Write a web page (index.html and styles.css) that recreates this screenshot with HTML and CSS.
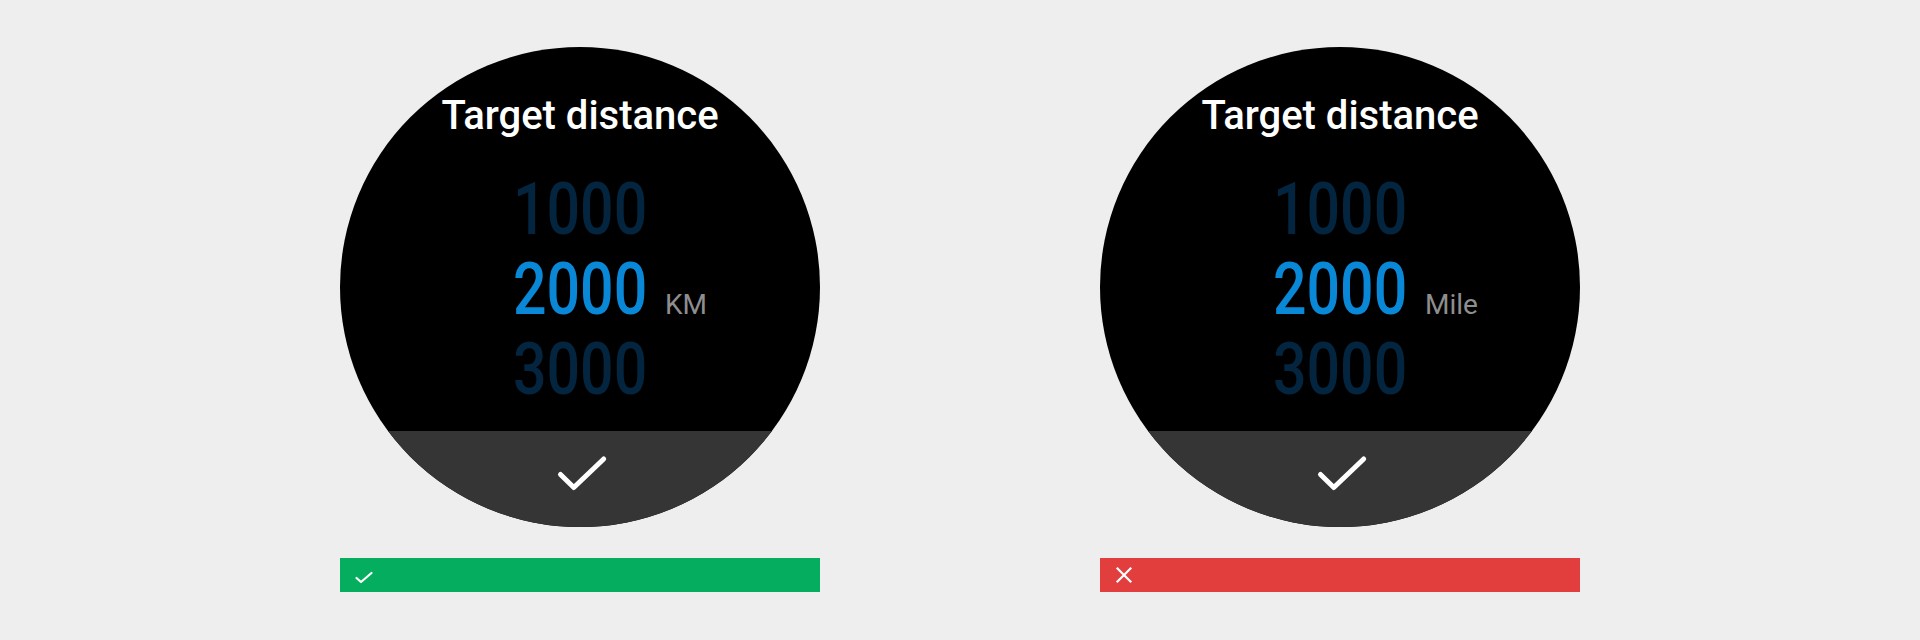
FILE: index.html
```html
<!DOCTYPE html>
<html lang="en">
<head>
<meta charset="utf-8">
<title>Target distance</title>
<link rel="stylesheet" href="styles.css">
</head>
<body>
<main class="page">
  <section class="example">
    <div class="watch">
      <h1 class="title">Target distance</h1>
      <div class="picker">
        <div class="row dim"><span></span><span class="num"><span class="digits">1000</span></span><span></span></div>
        <div class="row active"><span></span><span class="num"><span class="digits">2000</span></span><span class="unit">KM</span></div>
        <div class="row dim"><span></span><span class="num"><span class="digits">3000</span></span><span></span></div>
      </div>
      <div class="confirm">
        <svg class="confirm-icon" width="56" height="40" viewBox="0 0 56 40"><path d="M6.5 21.5 L19.8 34.5 L49.7 6" fill="none" stroke="#fff" stroke-width="5" stroke-linecap="round" stroke-linejoin="round"/></svg>
      </div>
    </div>
    <div class="verdict good">
      <svg width="20" height="20" viewBox="0 0 20 20"><path d="M2.5 13 L7 17 L17.5 8" fill="none" stroke="#fff" stroke-width="2.2" stroke-linecap="round" stroke-linejoin="round"/></svg>
    </div>
  </section>
  <section class="example">
    <div class="watch">
      <h1 class="title">Target distance</h1>
      <div class="picker">
        <div class="row dim"><span></span><span class="num"><span class="digits">1000</span></span><span></span></div>
        <div class="row active"><span></span><span class="num"><span class="digits">2000</span></span><span class="unit">Mile</span></div>
        <div class="row dim"><span></span><span class="num"><span class="digits">3000</span></span><span></span></div>
      </div>
      <div class="confirm">
        <svg class="confirm-icon" width="56" height="40" viewBox="0 0 56 40"><path d="M6.5 21.5 L19.8 34.5 L49.7 6" fill="none" stroke="#fff" stroke-width="5" stroke-linecap="round" stroke-linejoin="round"/></svg>
      </div>
    </div>
    <div class="verdict bad">
      <svg width="20" height="20" viewBox="0 0 20 20"><path d="M3.5 3.5 L16.5 16.5 M16.5 3.5 L3.5 16.5" fill="none" stroke="#fff" stroke-width="2.2" stroke-linecap="square"/></svg>
    </div>
  </section>
</main>
</body>
</html>
```

FILE: styles.css
```css
html, body {
  margin: 0;
  padding: 0;
  background: #eeeeee;
  font-family: Roboto, "Noto Sans", sans-serif;
}

.page {
  display: flex;
  justify-content: center;
  gap: 280px;
  padding-top: 47px;
}

.example {
  width: 480px;
  display: flex;
  flex-direction: column;
  gap: 31px;
}

.watch {
  width: 480px;
  height: 480px;
  border-radius: 50%;
  overflow: hidden;
  background: #000;
  display: flex;
  flex-direction: column;
}

.title {
  margin: 45px 0 0;
  font-size: 40px;
  font-weight: 500;
  line-height: 48px;
  color: #fff;
  text-align: center;
}

.picker {
  margin-top: 30px;
  display: flex;
  flex-direction: column;
}

.row {
  display: grid;
  grid-template-columns: 1fr 134px 1fr;
  align-items: baseline;
  height: 80px;
  line-height: 80px;
}

.num {
  font-size: 72px;
  font-weight: 500;
  white-space: nowrap;
}

.digits {
  display: inline-block;
  transform: scaleX(0.82);
  transform-origin: left center;
}

.dim .num { color: #04253f; }
.active .num { color: #0a88d8; }

.unit {
  margin-left: 18px;
  font-size: 28px;
  color: #8e8e8e;
}

.confirm {
  margin-top: auto;
  height: 96px;
  background: #353535;
  display: flex;
  justify-content: center;
  align-items: flex-start;
  padding-top: 22px;
  box-sizing: border-box;
}

.confirm-icon {
  display: block;
  margin-left: 4px;
}

.verdict {
  height: 34px;
  display: flex;
  align-items: center;
  padding-left: 14px;
}

.verdict svg { display: block; }

.good { background: #05ae5f; }
.bad { background: #e33e3e; }
```
